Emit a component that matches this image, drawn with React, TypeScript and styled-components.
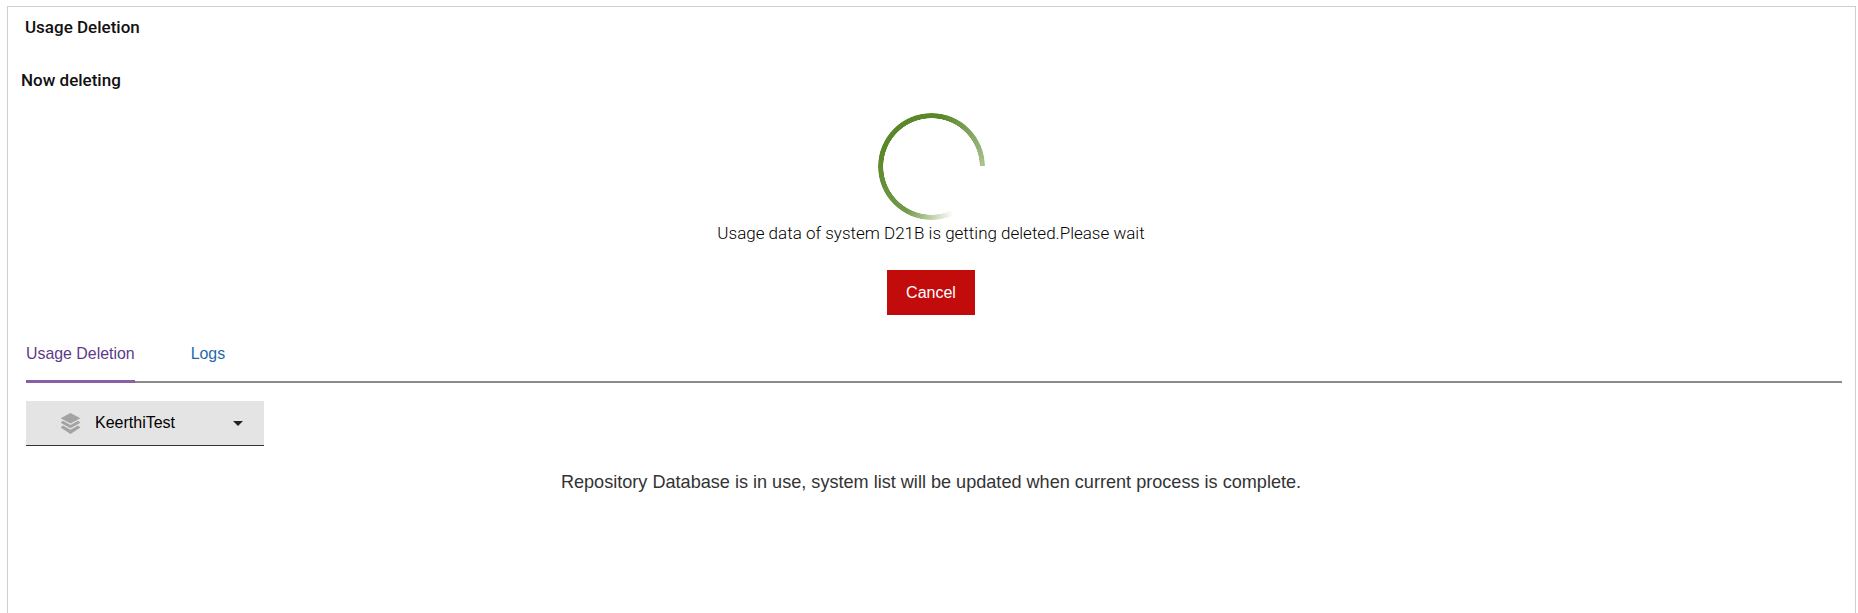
import * as React from "react";
import styled, { createGlobalStyle } from "styled-components";

const GlobalStyle = createGlobalStyle`
  html, body {
    margin: 0;
    padding: 0;
    height: 100%;
    background: #fff;
    overflow: hidden;
  }
`;

const Page = styled.div`
  box-sizing: border-box;
  height: 613px;
  padding: 6px 2px 0 7px;
`;

const Panel = styled.div`
  box-sizing: border-box;
  height: 100%;
  border: 1px solid #cfcfcf;
  border-bottom: none;
  padding: 0 13px 0 13px;
`;

const Title = styled.h1`
  margin: 0;
  padding: 11px 0 0 4px;
  font: 500 17px/19px Roboto, sans-serif;
  color: #111;
`;

const SubTitle = styled.h2`
  margin: 0;
  padding-top: 34px;
  font: 500 17px/19px Roboto, sans-serif;
  color: #111;
`;

const Progress = styled.div`
  display: flex;
  flex-direction: column;
  align-items: center;
  padding: 23px 1px 0 0;
`;

const Spinner = styled.div`
  width: 107px;
  height: 107px;
  border-radius: 50%;
  background: conic-gradient(
    from 90deg,
    rgba(90, 135, 40, 0) 0deg,
    rgba(90, 135, 40, 0) 65deg,
    rgba(90, 135, 40, 0.85) 120deg,
    rgba(90, 135, 40, 1) 200deg,
    rgba(90, 135, 40, 1) 280deg,
    rgba(90, 135, 40, 0.5) 360deg
  );
  -webkit-mask: radial-gradient(closest-side, transparent calc(100% - 5.5px), #000 calc(100% - 5px));
  mask: radial-gradient(closest-side, transparent calc(100% - 5.5px), #000 calc(100% - 5px));
`;

const StatusText = styled.p`
  margin: 4px 0 0;
  font: 300 17px/19px Roboto, sans-serif;
  color: #000;
`;

const CancelButton = styled.button`
  box-sizing: border-box;
  width: 88px;
  height: 45px;
  margin-top: 27px;
  border: none;
  background: #c20c0c;
  color: #fff;
  font: 400 16px "Liberation Sans", Arial, sans-serif;
`;

const TabBar = styled.div`
  display: flex;
  gap: 56px;
  margin: 19px 0 0 5px;
  border-bottom: 2px solid #8c8c8c;
`;

const Tab = styled.div<{ $active?: boolean }>`
  height: 46px;
  margin-bottom: -2px;
  font: 400 15.9px/40px "Liberation Sans", Arial, sans-serif;
  color: ${(p) => (p.$active ? "#5e3a87" : "#1f6aa8")};
  border-bottom: 3px solid ${(p) => (p.$active ? "#8a5fa8" : "transparent")};
`;

const SystemSelect = styled.div`
  box-sizing: border-box;
  display: flex;
  align-items: center;
  width: 238px;
  height: 45px;
  margin: 18px 0 0 5px;
  padding-left: 34px;
  background: #e4e4e4;
  border-bottom: 1px solid #333;
  font: 400 16px "Liberation Sans", Arial, sans-serif;
  color: #000;
`;

const SelectIcon = styled.svg`
  width: 21px;
  height: 23px;
  margin-right: 14px;
  flex: none;
`;

const SelectLabel = styled.span`
  flex: 1;
`;

const Caret = styled.span`
  width: 0;
  height: 0;
  margin-right: 21px;
  border-left: 5px solid transparent;
  border-right: 5px solid transparent;
  border-top: 5px solid #222;
`;

const Notice = styled.p`
  margin: 26px 0 0;
  padding-right: 1px;
  text-align: center;
  font: 400 18.1px/21px "Liberation Sans", Arial, sans-serif;
  color: #333;
`;

export default function App() {
  return (
    <Page>
      <GlobalStyle />
      <Panel>
        <Title>Usage Deletion</Title>
        <SubTitle>Now deleting</SubTitle>
        <Progress>
          <Spinner />
          <StatusText>Usage data of system D21B is getting deleted.Please wait</StatusText>
          <CancelButton>Cancel</CancelButton>
        </Progress>
        <TabBar>
          <Tab $active>Usage Deletion</Tab>
          <Tab>Logs</Tab>
        </TabBar>
        <SystemSelect>
          <SelectIcon viewBox="0 0 20 22">
            <path d="M10 1 L19.5 6 L10 11 L0.5 6 Z" fill="#a3a3a3" />
            <path d="M2.8 8.4 L0.5 10.2 L10 15.6 L19.5 10.2 L17.2 8.4 L10 12.4 Z" fill="#a3a3a3" />
            <path d="M2.8 13 L0.5 14.8 L10 21 L19.5 14.8 L17.2 13 L10 17 Z" fill="#a3a3a3" />
          </SelectIcon>
          <SelectLabel>KeerthiTest</SelectLabel>
          <Caret />
        </SystemSelect>
        <Notice>Repository Database is in use, system list will be updated when current process is complete.</Notice>
      </Panel>
    </Page>
  );
}
